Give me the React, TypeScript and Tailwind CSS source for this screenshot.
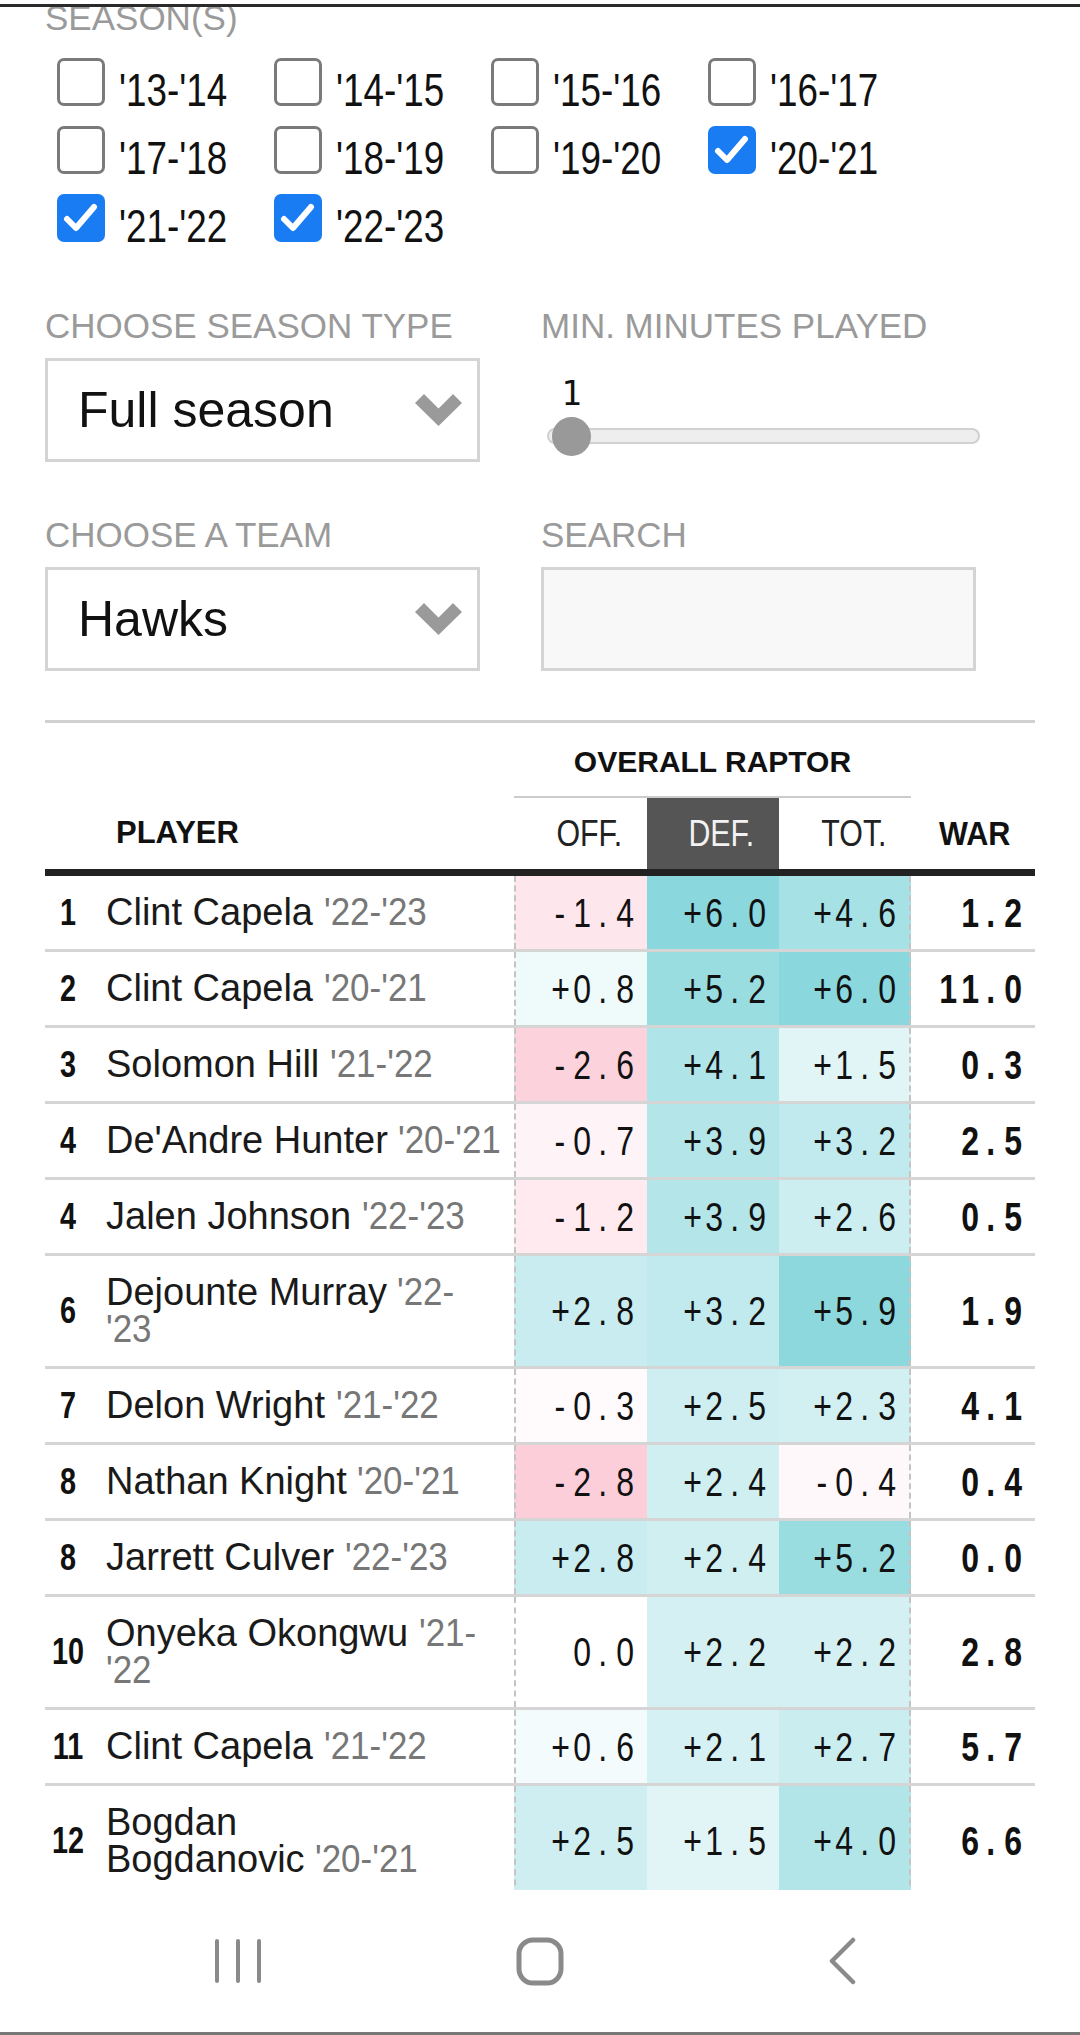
import React from "react";

const SANS = "font-['Liberation_Sans',Arial,sans-serif]";

const seasons: [string, boolean][] = [
  ["'13-'14", false],
  ["'14-'15", false],
  ["'15-'16", false],
  ["'16-'17", false],
  ["'17-'18", false],
  ["'18-'19", false],
  ["'19-'20", false],
  ["'20-'21", true],
  ["'21-'22", true],
  ["'22-'23", true],
];

type Row = {
  rank: string;
  name: string;
  season: string;
  off: string;
  def: string;
  tot: string;
  war: string;
  wrap?: "season" | "name";
};

const rows: Row[] = [
  { rank: "1", name: "Clint Capela", season: "'22-'23", off: "-1.4", def: "+6.0", tot: "+4.6", war: "1.2" },
  { rank: "2", name: "Clint Capela", season: "'20-'21", off: "+0.8", def: "+5.2", tot: "+6.0", war: "11.0" },
  { rank: "3", name: "Solomon Hill", season: "'21-'22", off: "-2.6", def: "+4.1", tot: "+1.5", war: "0.3" },
  { rank: "4", name: "De'Andre Hunter", season: "'20-'21", off: "-0.7", def: "+3.9", tot: "+3.2", war: "2.5" },
  { rank: "4", name: "Jalen Johnson", season: "'22-'23", off: "-1.2", def: "+3.9", tot: "+2.6", war: "0.5" },
  { rank: "6", name: "Dejounte Murray", season: "'22-'23", off: "+2.8", def: "+3.2", tot: "+5.9", war: "1.9", wrap: "season" },
  { rank: "7", name: "Delon Wright", season: "'21-'22", off: "-0.3", def: "+2.5", tot: "+2.3", war: "4.1" },
  { rank: "8", name: "Nathan Knight", season: "'20-'21", off: "-2.8", def: "+2.4", tot: "-0.4", war: "0.4" },
  { rank: "8", name: "Jarrett Culver", season: "'22-'23", off: "+2.8", def: "+2.4", tot: "+5.2", war: "0.0" },
  { rank: "10", name: "Onyeka Okongwu", season: "'21-'22", off: "0.0", def: "+2.2", tot: "+2.2", war: "2.8", wrap: "season" },
  { rank: "11", name: "Clint Capela", season: "'21-'22", off: "+0.6", def: "+2.1", tot: "+2.7", war: "5.7" },
  { rank: "12", name: "Bogdan Bogdanovic", season: "'20-'21", off: "+2.5", def: "+1.5", tot: "+4.0", war: "6.6", wrap: "name" },
];

function cellColor(v: string): string {
  const n = parseFloat(v);
  if (n > 0) {
    const t = Math.min(n / 6.5, 1);
    const r = Math.round(255 - t * (255 - 128));
    const g = Math.round(255 - t * (255 - 212));
    const b = Math.round(255 - t * (255 - 218));
    return `rgb(${r},${g},${b})`;
  }
  if (n < 0) {
    const t = Math.min(-n / 6, 1);
    const r = Math.round(255 - t * (255 - 248));
    const g = Math.round(255 - t * (255 - 150));
    const b = Math.round(255 - t * (255 - 175));
    return `rgb(${r},${g},${b})`;
  }
  return "#ffffff";
}

function Num({ value, bold }: { value: string; bold?: boolean }) {
  return (
    <span className={`${SANS} text-[40px] leading-[40px] text-[#111] ${bold ? "font-bold" : ""} flex`}>
      {value.split("").map((c, i) => (
        <span key={i} className="inline-block w-[21.5px] text-center scale-x-[0.8]">
          {c}
        </span>
      ))}
    </span>
  );
}

function Chevron() {
  return (
    <svg width="47" height="32" viewBox="0 0 47 32">
      <polygon points="0,9 9,0 23.5,14.5 38,0 47,9 23.5,32" fill="#9a9a9a" />
    </svg>
  );
}

function Checkbox({ checked }: { checked: boolean }) {
  if (checked) {
    return (
      <div className="w-[48px] h-[48px] rounded-[7px] bg-[#1a7cf2] flex items-center justify-center shrink-0">
        <svg width="48" height="48" viewBox="0 0 48 48">
          <polyline
            points="10,25 19,34 37,13"
            fill="none"
            stroke="#ffffff"
            strokeWidth="6"
            strokeLinecap="round"
            strokeLinejoin="round"
          />
        </svg>
      </div>
    );
  }
  return <div className="w-[48px] h-[48px] rounded-[7px] border-[3px] border-[#7a7a7a] bg-white shrink-0" />;
}

function Label({ children }: { children: React.ReactNode }) {
  return <div className={`${SANS} text-[35px] leading-[34px] text-[#9a9a9a] whitespace-nowrap`}>{children}</div>;
}

function Select({ value }: { value: string }) {
  return (
    <div className="mt-[15px] h-[104px] border-[3px] border-[#d4d4d4] bg-white flex items-center justify-between pl-[30px] pr-[15px]">
      <span className={`${SANS} text-[50px] text-[#111]`}>{value}</span>
      <Chevron />
    </div>
  );
}

function Season({ children }: { children: React.ReactNode }) {
  return (
    <span className={`${SANS} inline-block origin-left scale-x-[0.92] text-[38px] text-[#777]`}>{children}</span>
  );
}

function NameCell({ row }: { row: Row }) {
  let content: React.ReactNode;
  if (row.wrap === "season") {
    const cut = row.season.indexOf("-") + 1;
    content = (
      <>
        {row.name} <Season>{row.season.slice(0, cut)}</Season>
        <br />
        <Season>{row.season.slice(cut)}</Season>
      </>
    );
  } else if (row.wrap === "name") {
    const parts = row.name.split(" ");
    content = (
      <>
        {parts[0]}
        <br />
        {parts.slice(1).join(" ")} <Season>{row.season}</Season>
      </>
    );
  } else {
    content = (
      <>
        {row.name} <Season>{row.season}</Season>
      </>
    );
  }
  return (
    <div className="flex items-center h-full">
      <span className={`${SANS} font-bold text-[36px] text-[#111] w-[47px] text-center shrink-0`}>
        <span className="inline-block scale-x-[0.8]">{row.rank}</span>
      </span>
      <span className={`${SANS} text-[38px] leading-[37px] text-[#1a1a1a] ml-[14px] whitespace-nowrap py-[18px]`}>
        {content}
      </span>
    </div>
  );
}

function HeadText({ children, light }: { children: React.ReactNode; light?: boolean }) {
  return (
    <span
      className={`${SANS} inline-block origin-right scale-x-[0.82] text-[37px] ${light ? "text-[#f2f2f2]" : "text-[#222]"}`}
    >
      {children}
    </span>
  );
}

export default function App() {
  return (
    <div className="w-[1080px] h-[2035px] bg-white flex flex-col overflow-hidden">
      <div className="h-[4px] shrink-0" />
      <div className="h-[3px] bg-[#2a2a2a] shrink-0" />
      <div className="flex-1 min-h-0 overflow-hidden px-[45px]">
        <div className="-mt-[6px]">
          <Label>SEASON(S)</Label>
        </div>

        <div className="mt-[23px] ml-[12px] grid grid-cols-[217px_217px_217px_217px] gap-y-[20px]">
          {seasons.map(([s, c]) => (
            <div key={s} className="flex items-start h-[48px]">
              <Checkbox checked={c} />
              <span
                className={`${SANS} inline-block origin-left scale-x-[0.8] text-[46px] leading-[48px] mt-[8px] ml-[14px] text-[#111] whitespace-nowrap`}
              >
                {s}
              </span>
            </div>
          ))}
        </div>

        <div className="mt-[67px] grid grid-cols-[435px_435px] gap-x-[61px]">
          <div>
            <Label>CHOOSE SEASON TYPE</Label>
            <Select value="Full season" />
          </div>
          <div>
            <Label>MIN. MINUTES PLAYED</Label>
            <div className="mt-[33px] ml-[11px] w-[39px] text-center font-['DejaVu_Sans_Mono',monospace] text-[34px] leading-[34px] text-[#111]">
              1
            </div>
            <div className="relative ml-[6px] w-[433px] h-[39px] mt-[7px]">
              <div className="absolute left-0 right-0 top-[11px] h-[16px] rounded-full bg-[#eeeeee] border-2 border-[#d0d0d0]" />
              <div className="absolute left-[5px] top-0 w-[39px] h-[39px] rounded-full bg-[#999999]" />
            </div>
          </div>
        </div>

        <div className="mt-[56px] grid grid-cols-[435px_435px] gap-x-[61px]">
          <div>
            <Label>CHOOSE A TEAM</Label>
            <Select value="Hawks" />
          </div>
          <div>
            <Label>SEARCH</Label>
            <div className="mt-[15px] h-[104px] border-[3px] border-[#d4d4d4] bg-[#f8f8f8]" />
          </div>
        </div>

        <div className="mt-[49px] h-[3px] bg-[#d0d0d0]" />

        <div className="grid grid-cols-[469px_133px_132px_132px_124px]">
          <div className="h-[75px]" />
          <div className="col-span-3 h-[75px] border-b-2 border-[#cccccc] flex items-center justify-center pt-[4px]">
            <span className={`${SANS} font-bold text-[30px] text-[#111]`}>OVERALL RAPTOR</span>
          </div>
          <div className="h-[75px]" />

          <div className="h-[71px] flex items-center pl-[71px]">
            <span className={`${SANS} font-bold text-[31px] text-[#111]`}>PLAYER</span>
          </div>
          <div className="h-[71px] flex items-center justify-end pr-[25px]">
            <HeadText>OFF.</HeadText>
          </div>
          <div className="h-[71px] flex items-center justify-end pr-[25px] bg-[#555555]">
            <HeadText light>DEF.</HeadText>
          </div>
          <div className="h-[71px] flex items-center justify-end pr-[25px]">
            <HeadText>TOT.</HeadText>
          </div>
          <div className="h-[71px] flex items-center justify-end pr-[25px]">
            <span className={`${SANS} font-bold text-[34px] text-[#111] inline-block origin-right scale-x-[0.9]`}>
              WAR
            </span>
          </div>
        </div>
        <div className="h-[7px] bg-[#222222]" />

        {rows.map((r, i) => (
          <div
            key={i}
            className={`grid grid-cols-[469px_133px_132px_132px_124px] ${
              i < rows.length - 1 ? "border-b-[3px] border-[#d5d5d5]" : ""
            }`}
          >
            <NameCell row={r} />
            <div
              className="flex items-center justify-end pr-[12px] border-l-2 border-dashed border-[#c4c4c4]"
              style={{ backgroundColor: cellColor(r.off) }}
            >
              <Num value={r.off} />
            </div>
            <div className="flex items-center justify-end pr-[12px]" style={{ backgroundColor: cellColor(r.def) }}>
              <Num value={r.def} />
            </div>
            <div
              className="flex items-center justify-end pr-[12px] border-r-2 border-dashed border-[#c4c4c4]"
              style={{ backgroundColor: cellColor(r.tot) }}
            >
              <Num value={r.tot} />
            </div>
            <div className="flex items-center justify-end pr-[12px]">
              <Num value={r.war} bold />
            </div>
          </div>
        ))}
      </div>

      <div className="h-[142px] shrink-0 flex items-center justify-center gap-[242px]">
        <div className="w-[60px] flex justify-center">
          <svg width="48" height="46" viewBox="0 0 48 46">
            <line x1="3" y1="3" x2="3" y2="43" stroke="#8a8a8a" strokeWidth="4" strokeLinecap="round" />
            <line x1="24" y1="3" x2="24" y2="43" stroke="#8a8a8a" strokeWidth="4" strokeLinecap="round" />
            <line x1="45" y1="3" x2="45" y2="43" stroke="#8a8a8a" strokeWidth="4" strokeLinecap="round" />
          </svg>
        </div>
        <div className="w-[60px] flex justify-center">
          <svg width="48" height="49" viewBox="0 0 48 49">
            <rect x="3" y="3" width="42" height="43" rx="14" fill="none" stroke="#8a8a8a" strokeWidth="5" />
          </svg>
        </div>
        <div className="w-[60px] flex justify-center">
          <svg width="30" height="48" viewBox="0 0 30 48">
            <polyline
              points="26,3 5,24 26,45"
              fill="none"
              stroke="#8a8a8a"
              strokeWidth="4.5"
              strokeLinecap="round"
              strokeLinejoin="round"
            />
          </svg>
        </div>
      </div>
      <div className="h-[3px] bg-[#777777] shrink-0" />
    </div>
  );
}
